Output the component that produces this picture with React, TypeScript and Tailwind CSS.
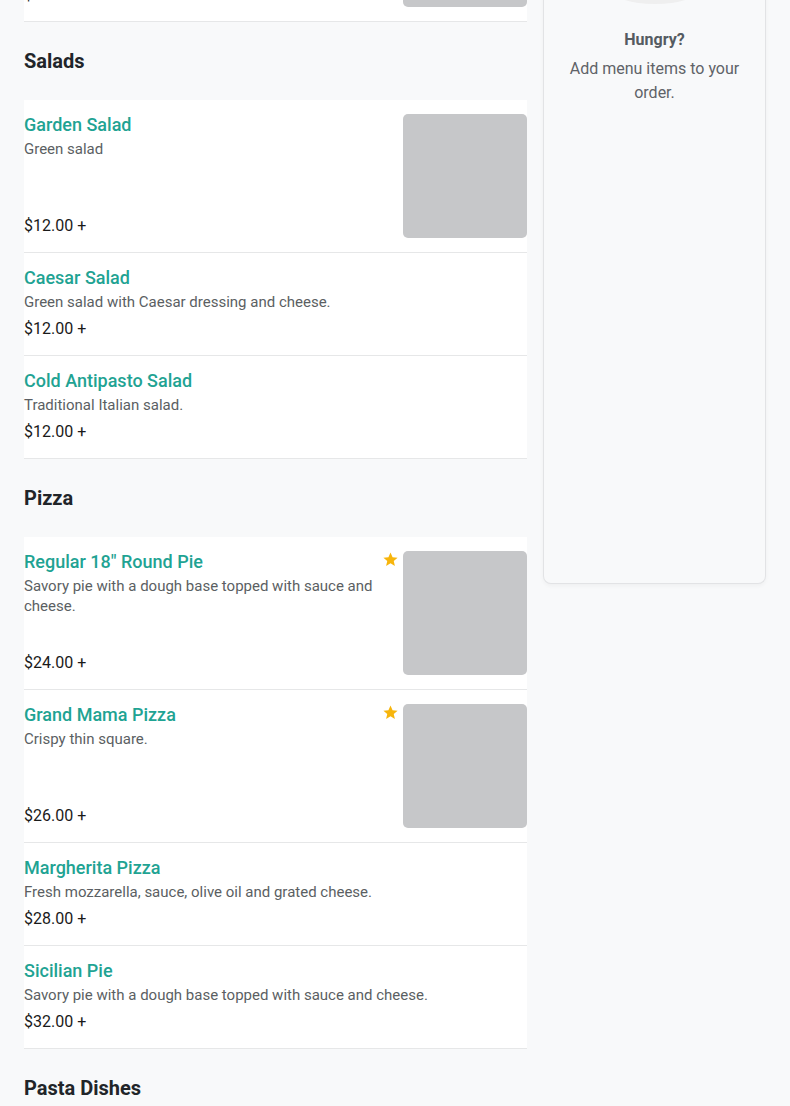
const teal = 'text-[#1fa393]';

type Item = {
  name: string;
  desc: string;
  price: string;
  image?: boolean;
  star?: boolean;
};

const Star = () => (
  <svg width="17" height="17" viewBox="0 0 24 24" className="shrink-0">
    <path
      d="M12 2.2l2.9 6.6 7.1.6-5.4 4.7 1.6 7-6.2-3.7-6.2 3.7 1.6-7L2 9.4l7.1-.6z"
      fill="#f7b50c"
    />
  </svg>
);

const MenuItem = ({ item }: { item: Item }) => (
  <div className="flex gap-[4px] border-b border-[#e6e7e8] bg-white py-[14px]">
    <div className={`flex flex-1 flex-col ${item.image ? 'min-h-[124px] justify-between' : ''}`}>
      <div>
        <div className="flex items-start justify-between">
          <h3 className={`text-[18px] leading-[22px] font-medium ${teal}`}>{item.name}</h3>
          {item.star && <Star />}
        </div>
        <p className="mt-[3px] text-[15px] leading-[20px] text-[#5b5f63]">{item.desc}</p>
      </div>
      <p className="mt-[5px] text-[16px] leading-[24px] text-[#1a1a1a]">{item.price}</p>
    </div>
    {item.image && <div className="h-[124px] w-[124px] shrink-0 rounded-[5px] bg-[#c6c7c9]" />}
  </div>
);

const Section = ({ title, items }: { title: string; items: Item[] }) => (
  <div>
    <h2 className="py-[25px] text-[20px] leading-[28px] font-bold text-[#212529]">{title}</h2>
    <div>
      {items.map((item) => (
        <MenuItem key={item.name} item={item} />
      ))}
    </div>
  </div>
);

const salads: Item[] = [
  { name: 'Garden Salad', desc: 'Green salad', price: '$12.00 +', image: true },
  { name: 'Caesar Salad', desc: 'Green salad with Caesar dressing and cheese.', price: '$12.00 +' },
  { name: 'Cold Antipasto Salad', desc: 'Traditional Italian salad.', price: '$12.00 +' },
];

const pizza: Item[] = [
  {
    name: 'Regular 18" Round Pie',
    desc: 'Savory pie with a dough base topped with sauce and cheese.',
    price: '$24.00 +',
    image: true,
    star: true,
  },
  { name: 'Grand Mama Pizza', desc: 'Crispy thin square.', price: '$26.00 +', image: true, star: true },
  { name: 'Margherita Pizza', desc: 'Fresh mozzarella, sauce, olive oil and grated cheese.', price: '$28.00 +' },
  { name: 'Sicilian Pie', desc: 'Savory pie with a dough base topped with sauce and cheese.', price: '$32.00 +' },
];

export default function App() {
  return (
    <div
      className="h-[1106px] overflow-hidden bg-[#f8f9fa]"
      style={{ fontFamily: 'Roboto, "Liberation Sans", sans-serif' }}
    >
      <div className="-mt-[131px] flex items-start gap-4 px-6">
        <div className="w-[503px] shrink-0">
          <MenuItem item={{ name: 'Garlic Bread', desc: 'Toasted bread.', price: '$6.00 +', image: true }} />
          <Section title="Salads" items={salads} />
          <Section title="Pizza" items={pizza} />
          <Section title="Pasta Dishes" items={[]} />
        </div>
        <aside className="flex h-[715px] flex-1 flex-col items-center rounded-b-lg border border-t-0 border-[#e2e3e5] bg-[#f8f9fa] px-4 text-center shadow-[0_2px_4px_rgba(0,0,0,0.04)]">
          <div className="mt-[99px] h-[36px] w-[96px] rounded-[50%] bg-[#efefef]" />
          <p className="mt-[24px] text-[16px] leading-[24px] font-bold text-[#555b61]">Hungry?</p>
          <p className="mt-[5px] text-[16px] leading-[24px] text-[#5f6368]">
            Add menu items to your order.
          </p>
        </aside>
      </div>
    </div>
  );
}
